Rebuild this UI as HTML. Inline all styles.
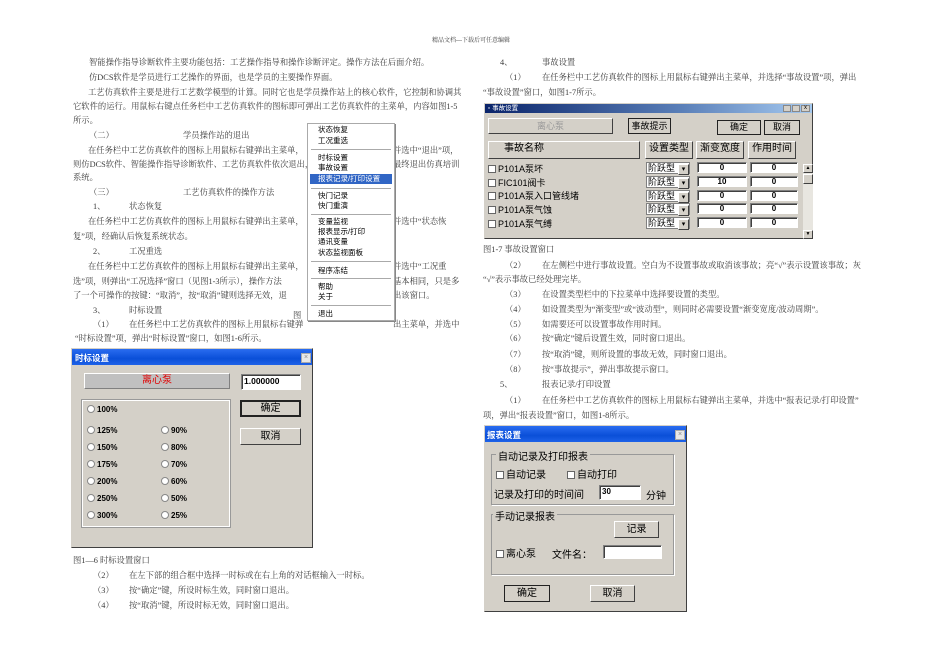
<!DOCTYPE html>
<html><head><meta charset="utf-8"><style>
*{margin:0;padding:0;box-sizing:border-box}
body{width:950px;height:672px;background:#fff;position:relative;overflow:hidden;font-family:"Liberation Serif","Noto Serif CJK SC",serif;color:#3a3a3a}
.t{position:absolute;white-space:nowrap;font-size:8.3px;line-height:10px}
.a{position:absolute}
.ui{font-family:"Liberation Sans","Noto Sans CJK SC",sans-serif;color:#000}
.dlg{position:absolute;background:#d4d0c8;border:1px solid #808080}
.btn{position:absolute;background:#d4d0c8;border:1px solid;border-color:#fff #404040 #404040 #fff;text-align:center;font-size:9px}
.in{position:absolute;background:#fff;border:1px solid;border-color:#808080 #fff #fff #808080;box-shadow:inset 1px 1px 0 #404040;font-size:8px;font-weight:bold;text-align:center}
.menu{position:absolute;left:307px;top:123px;width:88px;height:198px;background:#fff;border:1px solid #aaa;box-shadow:1px 1px 0 #888}
.mi{position:absolute;left:10px;font-size:7.5px;font-family:"Liberation Sans","Noto Sans CJK SC",sans-serif;color:#000;line-height:9px}
.sep{position:absolute;left:3px;right:3px;height:1px;background:#aaa}
.rad{position:absolute;font-size:8px;font-weight:bold;font-family:"Liberation Sans",sans-serif}
.rad:before{content:"";display:inline-block;width:6px;height:6px;border:1px solid #888;border-radius:50%;background:#fff;margin-right:2px;vertical-align:-1px}
.cb{position:absolute;font-size:8px;font-weight:bold}
.cb:before{content:"";display:inline-block;width:6px;height:6px;border:1px solid #666;background:#fff;margin-right:2px;vertical-align:-1px}
.cmb{position:absolute;background:#fff;border:1px solid #808080;font-size:9px;padding-left:1px}
.cmb:after{content:"▾";position:absolute;right:0;top:1px;width:9px;height:9px;background:#d4d0c8;font-size:7px;text-align:center;line-height:9px;border:1px solid;border-color:#fff #404040 #404040 #fff}
</style></head><body>

<div class="t" style="left:432px;top:36px;font-size:6px">精品文档---下载后可任意编辑</div>

<div class="t" style="left:89px;top:58px">智能操作指导诊断软件主要功能包括：工艺操作指导和操作诊断评定。操作方法在后面介绍。</div>
<div class="t" style="left:89px;top:73px">仿DCS软件是学员进行工艺操作的界面，也是学员的主要操作界面。</div>
<div class="t" style="left:88px;top:88px">工艺仿真软件主要是进行工艺数学模型的计算。同时它也是学员操作站上的核心软件，它控制和协调其</div>
<div class="t" style="left:73px;top:102px">它软件的运行。用鼠标右键点任务栏中工艺仿真软件的图标即可弹出工艺仿真软件的主菜单，内容如图1-5</div>
<div class="t" style="left:73px;top:116px">所示。</div>
<div class="t" style="left:89px;top:131px">（二）</div><div class="t" style="left:183px;top:131px">学员操作站的退出</div>
<div class="t" style="left:88px;top:146px">在任务栏中工艺仿真软件的图标上用鼠标右键弹出主菜单，</div><div class="t" style="left:393px;top:146px">并选中“退出”项，</div>
<div class="t" style="left:73px;top:160px">则仿DCS软件、智能操作指导诊断软件、工艺仿真软件依次退出，</div><div class="t" style="left:393px;top:160px">最终退出仿真培训</div>
<div class="t" style="left:73px;top:173px">系统。</div>
<div class="t" style="left:89px;top:188px">（三）</div><div class="t" style="left:183px;top:188px">工艺仿真软件的操作方法</div>
<div class="t" style="left:93px;top:202px">1、</div><div class="t" style="left:129px;top:202px">状态恢复</div>
<div class="t" style="left:88px;top:217px">在任务栏中工艺仿真软件的图标上用鼠标右键弹出主菜单，</div><div class="t" style="left:393px;top:217px">并选中“状态恢</div>
<div class="t" style="left:73px;top:232px">复”项，经确认后恢复系统状态。</div>
<div class="t" style="left:93px;top:247px">2、</div><div class="t" style="left:129px;top:247px">工况重选</div>
<div class="t" style="left:88px;top:262px">在任务栏中工艺仿真软件的图标上用鼠标右键弹出主菜单，</div><div class="t" style="left:393px;top:262px">并选中“工况重</div>
<div class="t" style="left:73px;top:277px">选”项，则弹出“工况选择”窗口（见图1-3所示），操作方法</div><div class="t" style="left:393px;top:277px">基本相同，只是多</div>
<div class="t" style="left:73px;top:291px">了一个可操作的按键：“取消”，按“取消”键则选择无效，退</div><div class="t" style="left:393px;top:291px">出该窗口。</div>
<div class="t" style="left:93px;top:306px">3、</div><div class="t" style="left:129px;top:306px">时标设置</div>
<div class="t" style="left:293px;top:311px">图</div>
<div class="t" style="left:93px;top:320px">（1）</div><div class="t" style="left:129px;top:320px">在任务栏中工艺仿真软件的图标上用鼠标右键弹</div><div class="t" style="left:393px;top:320px">出主菜单，并选中</div>
<div class="t" style="left:75px;top:334px">“时标设置”项，弹出“时标设置”窗口，如图1-6所示。</div>

<div class="menu">
<div class="mi" style="top:1px">状态恢复</div>
<div class="mi" style="top:12px">工况重选</div>
<div class="sep" style="top:25px"></div>
<div class="mi" style="top:29px">时标设置</div>
<div class="mi" style="top:39px">事故设置</div>
<div class="a" style="left:2px;right:2px;top:50px;height:10px;background:#3166c5"></div>
<div class="mi" style="top:50px;color:#fff">报表记录/打印设置</div>
<div class="sep" style="top:64px"></div>
<div class="mi" style="top:67px">快门记录</div>
<div class="mi" style="top:77px">快门重演</div>
<div class="sep" style="top:90px"></div>
<div class="mi" style="top:93px">变量监视</div>
<div class="mi" style="top:103px">报表显示/打印</div>
<div class="mi" style="top:113px">通讯变量</div>
<div class="mi" style="top:124px">状态监视面板</div>
<div class="sep" style="top:137px"></div>
<div class="mi" style="top:142px">程序冻结</div>
<div class="sep" style="top:154px"></div>
<div class="mi" style="top:158px">帮助</div>
<div class="mi" style="top:168px">关于</div>
<div class="sep" style="top:181px"></div>
<div class="mi" style="top:185px">退出</div>
</div>

<div class="dlg ui" style="left:71px;top:348px;width:242px;height:200px;border-color:#d4d0c8 #404040 #404040 #d4d0c8">
<div class="a" style="left:0;top:0;width:240px;height:16px;background:linear-gradient(#2a6cf0,#0a4fd8 60%,#1e62e8)"></div>
<div class="a" style="left:3px;top:3px;color:#fff;font-size:8.5px;font-weight:bold">时标设置</div>
<div class="a" style="left:229px;top:4px;width:10px;height:10px;background:#e8e8e8;border:1px solid #aaa;font-size:7px;line-height:8px;text-align:center;color:#888">×</div>
<div class="a" style="left:12px;top:24px;width:146px;height:16px;background:#c0c0c0;border:1px solid;border-color:#fff #808080 #808080 #fff;color:#e00000;font-size:10px;text-align:center;line-height:14px">离心泵</div>
<div class="in" style="left:169px;top:25px;width:60px;height:16px;text-align:left;padding-left:2px;font-size:8.5px;line-height:13px">1.000000</div>
<div class="a" style="left:10px;top:51px;width:148px;height:127px;border:1px solid #fff;outline:1px solid #999"></div>
<div class="btn" style="left:168px;top:51px;width:61px;height:17px;border:2px solid #222;line-height:13px;font-size:10px">确定</div>
<div class="btn" style="left:168px;top:79px;width:61px;height:17px;line-height:15px;font-size:10px">取消</div>
<div class="rad" style="left:15px;top:56px">100%</div>
<div class="rad" style="left:15px;top:77px">125%</div><div class="rad" style="left:89px;top:77px">90%</div>
<div class="rad" style="left:15px;top:94px">150%</div><div class="rad" style="left:89px;top:94px">80%</div>
<div class="rad" style="left:15px;top:111px">175%</div><div class="rad" style="left:89px;top:111px">70%</div>
<div class="rad" style="left:15px;top:128px">200%</div><div class="rad" style="left:89px;top:128px">60%</div>
<div class="rad" style="left:15px;top:145px">250%</div><div class="rad" style="left:89px;top:145px">50%</div>
<div class="rad" style="left:15px;top:162px">300%</div><div class="rad" style="left:89px;top:162px">25%</div>
</div>

<div class="t" style="left:73px;top:556px">图1—6 时标设置窗口</div>
<div class="t" style="left:93px;top:571px">（2）</div><div class="t" style="left:129px;top:571px">在左下部的组合框中选择一时标或在右上角的对话框输入一时标。</div>
<div class="t" style="left:93px;top:586px">（3）</div><div class="t" style="left:129px;top:586px">按“确定”键，所设时标生效，同时窗口退出。</div>
<div class="t" style="left:93px;top:601px">（4）</div><div class="t" style="left:129px;top:601px">按“取消”键，所设时标无效，同时窗口退出。</div>

<div class="t" style="left:500px;top:58px">4、</div><div class="t" style="left:542px;top:58px">事故设置</div>
<div class="t" style="left:505px;top:73px">（1）</div><div class="t" style="left:542px;top:73px">在任务栏中工艺仿真软件的图标上用鼠标右键弹出主菜单，并选择“事故设置”项，弹出</div>
<div class="t" style="left:483px;top:88px">“事故设置”窗口，如图1-7所示。</div>

<div class="dlg ui" style="left:484px;top:103px;width:329px;height:136px;border-color:#d4d0c8 #404040 #404040 #d4d0c8">
<div class="a" style="left:0;top:0;width:327px;height:9px;background:linear-gradient(90deg,#0a246a,#5a7fb8 60%,#a6caf0)"></div>
<div class="a" style="left:3px;top:0;color:#fff;font-size:6.5px;line-height:9px">▫ 事故设置</div>
<div class="a" style="left:298px;top:1px;width:8px;height:7px;background:#d4d0c8;border:1px solid #888"></div>
<div class="a" style="left:307px;top:1px;width:8px;height:7px;background:#d4d0c8;border:1px solid #888"></div>
<div class="a" style="left:316px;top:1px;width:9px;height:7px;background:#d4d0c8;border:1px solid #888;font-size:6px;line-height:5px;text-align:center">x</div>
<div class="btn" style="left:3px;top:14px;width:125px;height:16px;color:#999;line-height:14px">离心泵</div>
<div class="btn" style="left:143px;top:14px;width:43px;height:16px;border:1px solid #222;line-height:14px">事故提示</div>
<div class="btn" style="left:232px;top:16px;width:44px;height:15px;border:1px solid #222;line-height:13px">确定</div>
<div class="btn" style="left:279px;top:16px;width:36px;height:15px;border:1px solid #222;line-height:13px">取消</div>
<div class="btn" style="left:3px;top:37px;width:152px;height:18px;font-size:10px;text-align:left;padding-left:15px;line-height:13px">事故名称</div>
<div class="btn" style="left:160px;top:37px;width:48px;height:18px;font-size:10px;line-height:13px">设置类型</div>
<div class="btn" style="left:211px;top:37px;width:48px;height:18px;font-size:10px;line-height:13px">渐变宽度</div>
<div class="btn" style="left:263px;top:37px;width:48px;height:18px;font-size:10px;line-height:13px">作用时间</div>
<div class="cb" style="left:3px;top:58px;font-size:9px;font-weight:normal">P101A泵坏</div>
<div class="cb" style="left:3px;top:72px;font-size:9px;font-weight:normal">FIC101阀卡</div>
<div class="cb" style="left:3px;top:85px;font-size:9px;font-weight:normal">P101A泵入口管线堵</div>
<div class="cb" style="left:3px;top:99px;font-size:9px;font-weight:normal">P101A泵气蚀</div>
<div class="cb" style="left:3px;top:113px;font-size:9px;font-weight:normal">P101A泵气缚</div>
<div class="cmb" style="left:161px;top:58px;width:44px;height:12px;line-height:10px">阶跃型</div>
<div class="cmb" style="left:161px;top:72px;width:44px;height:12px;line-height:10px">阶跃型</div>
<div class="cmb" style="left:161px;top:86px;width:44px;height:12px;line-height:10px">阶跃型</div>
<div class="cmb" style="left:161px;top:99px;width:44px;height:12px;line-height:10px">阶跃型</div>
<div class="cmb" style="left:161px;top:113px;width:44px;height:12px;line-height:10px">阶跃型</div>
<div class="in" style="left:212px;top:58px;width:50px;height:11px;line-height:9px">0</div>
<div class="in" style="left:212px;top:72px;width:50px;height:11px;line-height:9px">10</div>
<div class="in" style="left:212px;top:86px;width:50px;height:11px;line-height:9px">0</div>
<div class="in" style="left:212px;top:99px;width:50px;height:11px;line-height:9px">0</div>
<div class="in" style="left:212px;top:113px;width:50px;height:11px;line-height:9px">0</div>
<div class="in" style="left:265px;top:58px;width:48px;height:11px;line-height:9px">0</div>
<div class="in" style="left:265px;top:72px;width:48px;height:11px;line-height:9px">0</div>
<div class="in" style="left:265px;top:86px;width:48px;height:11px;line-height:9px">0</div>
<div class="in" style="left:265px;top:99px;width:48px;height:11px;line-height:9px">0</div>
<div class="in" style="left:265px;top:113px;width:48px;height:11px;line-height:9px">0</div>
<div class="a" style="left:318px;top:60px;width:10px;height:75px;background:#e8e6e0"></div>
<div class="btn" style="left:318px;top:60px;width:10px;height:9px;font-size:5px;line-height:7px">▲</div>
<div class="btn" style="left:318px;top:70px;width:10px;height:10px"></div>
<div class="btn" style="left:318px;top:126px;width:10px;height:9px;font-size:5px;line-height:7px">▼</div>
</div>

<div class="t" style="left:483px;top:245px">图1-7 事故设置窗口</div>
<div class="t" style="left:505px;top:261px">（2）</div><div class="t" style="left:542px;top:261px">在左侧栏中进行事故设置。空白为不设置事故或取消该事故；亮“√”表示设置该事故；灰</div>
<div class="t" style="left:483px;top:275px">“√”表示事故已经处理完毕。</div>
<div class="t" style="left:505px;top:290px">（3）</div><div class="t" style="left:542px;top:290px">在设置类型栏中的下拉菜单中选择要设置的类型。</div>
<div class="t" style="left:505px;top:305px">（4）</div><div class="t" style="left:542px;top:305px">如设置类型为“渐变型”或“波动型”，则同时必需要设置“渐变宽度/波动周期”。</div>
<div class="t" style="left:505px;top:320px">（5）</div><div class="t" style="left:542px;top:320px">如需要还可以设置事故作用时间。</div>
<div class="t" style="left:505px;top:334px">（6）</div><div class="t" style="left:542px;top:334px">按“确定”键后设置生效，同时窗口退出。</div>
<div class="t" style="left:505px;top:350px">（7）</div><div class="t" style="left:542px;top:350px">按“取消”键，则所设置的事故无效，同时窗口退出。</div>
<div class="t" style="left:505px;top:365px">（8）</div><div class="t" style="left:542px;top:365px">按“事故提示”，弹出事故提示窗口。</div>
<div class="t" style="left:500px;top:380px">5、</div><div class="t" style="left:542px;top:380px">报表记录/打印设置</div>
<div class="t" style="left:505px;top:396px">（1）</div><div class="t" style="left:542px;top:396px">在任务栏中工艺仿真软件的图标上用鼠标右键弹出主菜单，并选中“报表记录/打印设置”</div>
<div class="t" style="left:483px;top:411px">项，弹出“报表设置”窗口，如图1-8所示。</div>

<div class="dlg ui" style="left:484px;top:425px;width:203px;height:187px;border-color:#d4d0c8 #404040 #404040 #d4d0c8">
<div class="a" style="left:0;top:0;width:201px;height:16px;background:linear-gradient(#2a6cf0,#0a4fd8 60%,#1e62e8)"></div>
<div class="a" style="left:2px;top:3px;color:#fff;font-size:8.5px;font-weight:bold">报表设置</div>
<div class="a" style="left:190px;top:4px;width:10px;height:10px;background:#e8e8e8;border:1px solid #aaa;font-size:7px;line-height:8px;text-align:center;color:#888">×</div>
<div class="a" style="left:6px;top:28px;width:183px;height:51px;border:1px solid #999;box-shadow:1px 1px 0 #fff"></div>
<div class="a" style="left:11px;top:22px;background:#d4d0c8;font-size:10px;padding:0 2px">自动记录及打印报表</div>
<div class="cb" style="left:11px;top:40px;font-size:10px;font-weight:normal">自动记录</div>
<div class="cb" style="left:82px;top:40px;font-size:10px;font-weight:normal">自动打印</div>
<div class="a" style="left:9px;top:60px;font-size:10px">记录及打印的时间间</div>
<div class="in" style="left:114px;top:59px;width:42px;height:15px;text-align:left;padding-left:2px;line-height:12px">30</div>
<div class="a" style="left:161px;top:61px;font-size:10px">分钟</div>
<div class="a" style="left:6px;top:88px;width:183px;height:61px;border:1px solid #999;box-shadow:1px 1px 0 #fff"></div>
<div class="a" style="left:8px;top:82px;background:#d4d0c8;font-size:10px;padding:0 2px">手动记录报表</div>
<div class="btn" style="left:129px;top:95px;width:45px;height:17px;font-size:10px;line-height:15px">记录</div>
<div class="cb" style="left:11px;top:119px;font-size:10px;font-weight:normal">离心泵</div>
<div class="a" style="left:67px;top:120px;font-size:10px">文件名：</div>
<div class="in" style="left:118px;top:119px;width:59px;height:14px"></div>
<div class="btn" style="left:19px;top:159px;width:46px;height:17px;border:1px solid #222;font-size:10px;line-height:15px">确定</div>
<div class="btn" style="left:105px;top:159px;width:45px;height:17px;font-size:10px;line-height:15px">取消</div>
</div>

</body></html>
